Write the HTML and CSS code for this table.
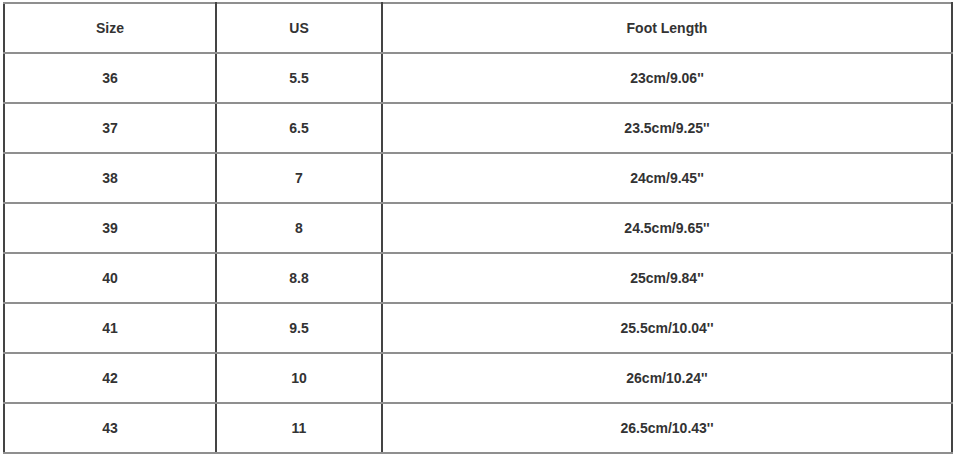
FILE: index.html
```html
<!DOCTYPE html>
<html>
<head>
<meta charset="utf-8">
<link rel="stylesheet" href="styles.css">
</head>
<body>
<table class="size-table">
  <tr><td class="c1">Size</td><td class="c2">US</td><td class="c3">Foot Length</td></tr>
  <tr><td>36</td><td>5.5</td><td>23cm/9.06''</td></tr>
  <tr><td>37</td><td>6.5</td><td>23.5cm/9.25''</td></tr>
  <tr><td>38</td><td>7</td><td>24cm/9.45''</td></tr>
  <tr><td>39</td><td>8</td><td>24.5cm/9.65''</td></tr>
  <tr><td>40</td><td>8.8</td><td>25cm/9.84''</td></tr>
  <tr><td>41</td><td>9.5</td><td>25.5cm/10.04''</td></tr>
  <tr><td>42</td><td>10</td><td>26cm/10.24''</td></tr>
  <tr><td>43</td><td>11</td><td>26.5cm/10.43''</td></tr>
</table>
</body>
</html>
```
FILE: styles.css
```css
html, body {
  margin: 0;
  padding: 0;
  background: #fff;
}
body {
  padding: 2px 3px 0 3px;
  font-family: "Liberation Sans", Arial, sans-serif;
}
.size-table {
  border-collapse: collapse;
  width: 950px;
  table-layout: fixed;
}
.size-table td {
  height: 48px;
  padding: 0;
  text-align: center;
  vertical-align: middle;
  font-size: 14px;
  font-weight: bold;
  color: #333;
  border-top: 2px solid #8f8f8f;
  border-bottom: 2px solid #8f8f8f;
  border-left: 2px solid #444;
  border-right: 2px solid #444;
}
.c1 { width: 210px; }
.c2 { width: 164px; }
```
